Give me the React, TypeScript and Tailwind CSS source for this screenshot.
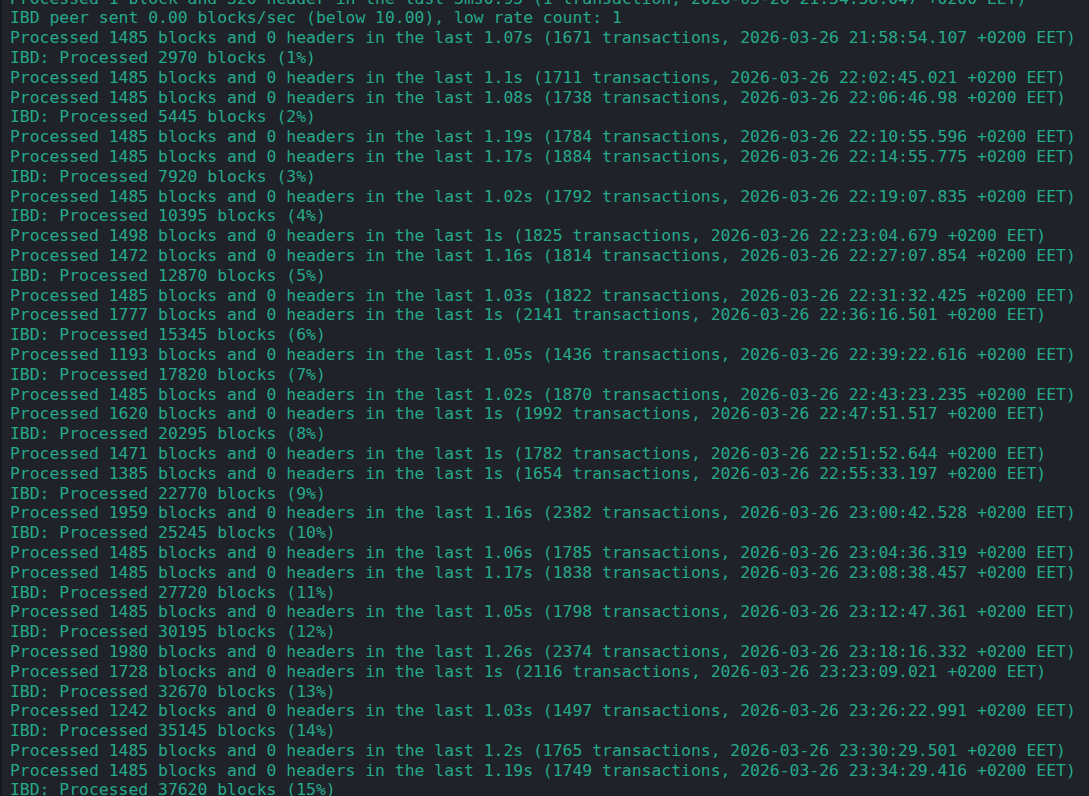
const LINES = [
  "Processed 1 block and 320 header in the last 3ms0.95 (1 transaction, 2026-03-26 21:54:58.047 +0200 EET)",
  "IBD peer sent 0.00 blocks/sec (below 10.00), low rate count: 1",
  "Processed 1485 blocks and 0 headers in the last 1.07s (1671 transactions, 2026-03-26 21:58:54.107 +0200 EET)",
  "IBD: Processed 2970 blocks (1%)",
  "Processed 1485 blocks and 0 headers in the last 1.1s (1711 transactions, 2026-03-26 22:02:45.021 +0200 EET)",
  "Processed 1485 blocks and 0 headers in the last 1.08s (1738 transactions, 2026-03-26 22:06:46.98 +0200 EET)",
  "IBD: Processed 5445 blocks (2%)",
  "Processed 1485 blocks and 0 headers in the last 1.19s (1784 transactions, 2026-03-26 22:10:55.596 +0200 EET)",
  "Processed 1485 blocks and 0 headers in the last 1.17s (1884 transactions, 2026-03-26 22:14:55.775 +0200 EET)",
  "IBD: Processed 7920 blocks (3%)",
  "Processed 1485 blocks and 0 headers in the last 1.02s (1792 transactions, 2026-03-26 22:19:07.835 +0200 EET)",
  "IBD: Processed 10395 blocks (4%)",
  "Processed 1498 blocks and 0 headers in the last 1s (1825 transactions, 2026-03-26 22:23:04.679 +0200 EET)",
  "Processed 1472 blocks and 0 headers in the last 1.16s (1814 transactions, 2026-03-26 22:27:07.854 +0200 EET)",
  "IBD: Processed 12870 blocks (5%)",
  "Processed 1485 blocks and 0 headers in the last 1.03s (1822 transactions, 2026-03-26 22:31:32.425 +0200 EET)",
  "Processed 1777 blocks and 0 headers in the last 1s (2141 transactions, 2026-03-26 22:36:16.501 +0200 EET)",
  "IBD: Processed 15345 blocks (6%)",
  "Processed 1193 blocks and 0 headers in the last 1.05s (1436 transactions, 2026-03-26 22:39:22.616 +0200 EET)",
  "IBD: Processed 17820 blocks (7%)",
  "Processed 1485 blocks and 0 headers in the last 1.02s (1870 transactions, 2026-03-26 22:43:23.235 +0200 EET)",
  "Processed 1620 blocks and 0 headers in the last 1s (1992 transactions, 2026-03-26 22:47:51.517 +0200 EET)",
  "IBD: Processed 20295 blocks (8%)",
  "Processed 1471 blocks and 0 headers in the last 1s (1782 transactions, 2026-03-26 22:51:52.644 +0200 EET)",
  "Processed 1385 blocks and 0 headers in the last 1s (1654 transactions, 2026-03-26 22:55:33.197 +0200 EET)",
  "IBD: Processed 22770 blocks (9%)",
  "Processed 1959 blocks and 0 headers in the last 1.16s (2382 transactions, 2026-03-26 23:00:42.528 +0200 EET)",
  "IBD: Processed 25245 blocks (10%)",
  "Processed 1485 blocks and 0 headers in the last 1.06s (1785 transactions, 2026-03-26 23:04:36.319 +0200 EET)",
  "Processed 1485 blocks and 0 headers in the last 1.17s (1838 transactions, 2026-03-26 23:08:38.457 +0200 EET)",
  "IBD: Processed 27720 blocks (11%)",
  "Processed 1485 blocks and 0 headers in the last 1.05s (1798 transactions, 2026-03-26 23:12:47.361 +0200 EET)",
  "IBD: Processed 30195 blocks (12%)",
  "Processed 1980 blocks and 0 headers in the last 1.26s (2374 transactions, 2026-03-26 23:18:16.332 +0200 EET)",
  "Processed 1728 blocks and 0 headers in the last 1s (2116 transactions, 2026-03-26 23:23:09.021 +0200 EET)",
  "IBD: Processed 32670 blocks (13%)",
  "Processed 1242 blocks and 0 headers in the last 1.03s (1497 transactions, 2026-03-26 23:26:22.991 +0200 EET)",
  "IBD: Processed 35145 blocks (14%)",
  "Processed 1485 blocks and 0 headers in the last 1.2s (1765 transactions, 2026-03-26 23:30:29.501 +0200 EET)",
  "Processed 1485 blocks and 0 headers in the last 1.19s (1749 transactions, 2026-03-26 23:34:29.416 +0200 EET)",
  "IBD: Processed 37620 blocks (15%)",
]

export default function App() {
  return (
    <div className="h-screen w-full overflow-hidden bg-[#1f2228] border-l-2 border-[#16181c]">
      {/* terminal scrolled so the first line is half cut off */}
      <div className="-mt-[11.4px] pl-[8px] font-['DejaVu_Sans_Mono',monospace] text-[16.4px] leading-[19.8px] text-[#26a98b] whitespace-pre">
        {LINES.map((line, i) => (
          <div key={i}>{line}</div>
        ))}
      </div>
    </div>
  )
}
